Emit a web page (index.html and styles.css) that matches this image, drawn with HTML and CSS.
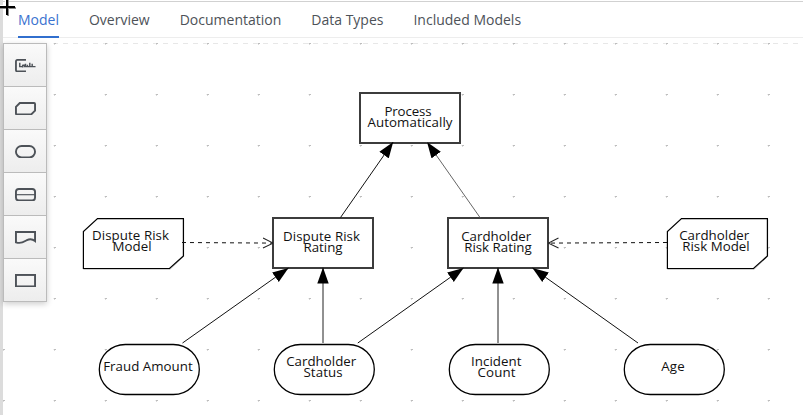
FILE: index.html
```html
<!DOCTYPE html>
<html lang="en">
<head>
<meta charset="utf-8">
<title>Decision model</title>
<link rel="stylesheet" href="styles.css">
</head>
<body>
<div class="editor">
  <nav class="tabs">
    <a class="tab active">Model</a>
    <a class="tab">Overview</a>
    <a class="tab">Documentation</a>
    <a class="tab">Data Types</a>
    <a class="tab">Included Models</a>
  </nav>
  <main class="canvas">
    <svg class="diagram" width="800" height="377" viewBox="3 38 800 377">
      <defs>
        <pattern id="grid" x="2" y="43" width="51" height="51" patternUnits="userSpaceOnUse">
          <path d="M1 0h2v1h-2z" fill="#bdbdbd"/><path d="M1 1h1v1h-1z" fill="#dadada"/><path d="M0 0h1v1h-1z" fill="#eee"/>
        </pattern>
        <marker id="arrow" viewBox="0 0 16 12" refX="16" refY="6" markerWidth="16" markerHeight="12" markerUnits="userSpaceOnUse" orient="auto">
          <path d="M0 .3 16 6 0 11.7z"/>
        </marker>
        <marker id="open" viewBox="0 0 11 12" refX="10.5" refY="6" markerWidth="11" markerHeight="12" markerUnits="userSpaceOnUse" orient="auto">
          <path d="M.5 1 10.5 6 .5 11" fill="none" stroke="#222"/>
        </marker>
      </defs>
      <path class="edge-line" d="M53 43.500H803"/>
      <rect x="3" y="43" width="800" height="372" fill="url(#grid)"/>
      <g class="decision">
        <rect x="360" y="93" width="100" height="50"/>
        <rect x="273" y="218" width="100" height="50"/>
        <rect x="448" y="218" width="100" height="50"/>
      </g>
      <g class="shade">
        <path d="M97.500 219.200H183.700V256.500L170 269.200H83.500V232z"/>
        <path d="M682 219.200H767.700V256.500L754 269.200H667.500V232z"/>
      </g>
      <g class="knowledge">
        <path d="M97.500 218.600H183.400V256L169.500 268.500H83.400V231.500z"/>
        <path d="M681.500 218.600H767.400V256L753.500 268.500H667.400V231.500z"/>
      </g>
      <g class="links">
        <path d="M340.500 217.500 393.200 142"/>
        <path class="light" d="M480 217.500 427 142"/>
        <path d="M182.500 343 288.500 268"/>
        <path class="soft" d="M323 343V267.500"/>
        <path d="M357.800 343 463.500 268"/>
        <path class="soft" d="M498 343V267.500"/>
        <path d="M638 343 532.500 268"/>
      </g>
      <g class="sources">
        <path d="M182 242.500 273 243.100"/>
        <path d="M667 242.500 548.500 243.100"/>
      </g>
      <g class="input">
        <rect x="99.300" y="344.500" width="100" height="50" rx="26"/>
        <rect x="274.300" y="344.500" width="100" height="50" rx="26"/>
        <rect x="449.300" y="344.500" width="100" height="50" rx="26"/>
        <rect x="624.300" y="344.500" width="100" height="50" rx="26"/>
      </g>
      <g class="labels">
        <text x="384.500" y="116" textLength="47">Process</text>
        <text x="367.500" y="127" textLength="85">Automatically</text>
        <text x="92" y="240" textLength="77">Dispute Risk</text>
        <text x="112.500" y="251" textLength="39">Model</text>
        <text x="283" y="241" textLength="77">Dispute Risk</text>
        <text x="303.500" y="252" textLength="39">Rating</text>
        <text x="461.200" y="241" textLength="70">Cardholder</text>
        <text x="464.200" y="252" textLength="67.500">Risk Rating</text>
        <text x="679.200" y="240" textLength="70">Cardholder</text>
        <text x="682.200" y="251" textLength="67.500">Risk Model</text>
        <text x="103.200" y="371" textLength="89.500">Fraud Amount</text>
        <text x="286.200" y="366" textLength="70">Cardholder</text>
        <text x="303.500" y="377" textLength="39">Status</text>
        <text x="471" y="366" textLength="50.500">Incident</text>
        <text x="477.500" y="377" textLength="38">Count</text>
        <text x="661.200" y="371" textLength="23.500">Age</text>
      </g>
    </svg>
    <div class="palette">
      <button class="tool"><svg viewBox="0 0 22 14"><path d="M11.500 1H2.500Q1 1 1 2.500V11.500Q1 13 2.500 13H11.500" stroke-width="1.900"/><path d="M5 4v4h2.500M8 6v3M8 6.500h2v2M11 5v3h1.500M13 6v2h2M15.500 4v4h2M18 5v3h3.500" stroke-width="1.500"/></svg></button>
      <button class="tool"><svg viewBox="0 0 22 14"><path d="M5 1H20Q21 1 21 2V9L17 13H2Q1 13 1 12V5z"/></svg></button>
      <button class="tool"><svg viewBox="0 0 22 14"><rect x="1" y="1" width="20" height="12" rx="6"/></svg></button>
      <button class="tool"><svg viewBox="0 0 22 14"><rect x="1" y="1" width="20" height="12" rx="3"/><path d="M1 7H21" stroke-width="1.200"/></svg></button>
      <button class="tool"><svg viewBox="0 0 22 14"><path d="M1 1H21V10.500C18 8 15.500 8 12.500 9.500S7 14 1 11.800z"/></svg></button>
      <button class="tool"><svg viewBox="0 0 22 14"><rect x="1" y="1" width="20" height="12"/></svg></button>
    </div>
  </main>
</div>
<svg class="pointer" width="18" height="18" viewBox="0 0 18 18"><path d="M0 7H17M7 0V17" stroke="#fff" stroke-width="4"/><path d="M0 8H16M8 0V16" stroke="#888" stroke-width="2"/><path d="M0 7H15M7 0V15" stroke="#000" stroke-width="2"/></svg>
</body>
</html>
```

FILE: styles.css
```css
* { box-sizing: border-box; }
body {
  margin: 0;
  overflow: hidden;
  background: #fff;
  font-family: "Open Sans", sans-serif;
}
.editor {
  height: 415px;
  padding-top: 1px;
  border-left: 3px solid #dcdcdc;
  display: flex;
  flex-direction: column;
}
.tabs {
  height: 37px;
  flex: none;
  display: flex;
  gap: 30px;
  padding-left: 15px;
  border-top: 1px solid #d1d1d1;
  border-bottom: 1px solid #ededed;
}
.tab {
  height: 36px;
  font-size: 14px;
  line-height: 36px;
  color: #4d5258;
  white-space: nowrap;
}
.tab.active {
  color: #3a72cf;
  border-bottom: 2px solid #316fce;
}
.canvas {
  position: relative;
  flex: 1;
  padding-top: 5px;
}
.diagram {
  position: absolute;
  inset: 0;
}
.palette {
  position: relative;
  width: 44px;
  display: flex;
  flex-direction: column;
  border: 1px solid #bbb;
  box-shadow: 0 2px 6px rgba(3, 3, 3, .2);
}
.tool {
  height: 43px;
  padding: 1px 0 0 1px;
  border: 0;
  border-bottom: 1px solid #bbb;
  background: linear-gradient(#fafafa, #ededed);
  display: flex;
  align-items: center;
  justify-content: center;
}
.tool:last-child {
  height: 42px;
  border-bottom: 0;
}
.tool svg {
  width: 21px;
  height: 13.4px;
  fill: none;
  stroke: #4d5258;
  stroke-width: 2;
}
.edge-line { stroke: #e7e7e7; stroke-dasharray: 5 5; }
.links path { stroke: #111; fill: none; marker-end: url(#arrow); }
.links .light { stroke: #666; }
.links .soft { stroke: #222; }
.sources path { stroke: #111; stroke-dasharray: 4 4; marker-end: url(#open); }
.decision rect { fill: #fff; stroke: #3c3c3c; stroke-width: 2; }
.shade path { fill: none; stroke: #bbb; }
.knowledge path { fill: #fff; stroke: #000; stroke-width: 1.2; }
.input rect { fill: #fff; stroke: #000; stroke-width: 1.3; }
.labels text { font-size: 13.3px; fill: #111; }
.pointer { position: absolute; left: 0; top: 0; }
```
